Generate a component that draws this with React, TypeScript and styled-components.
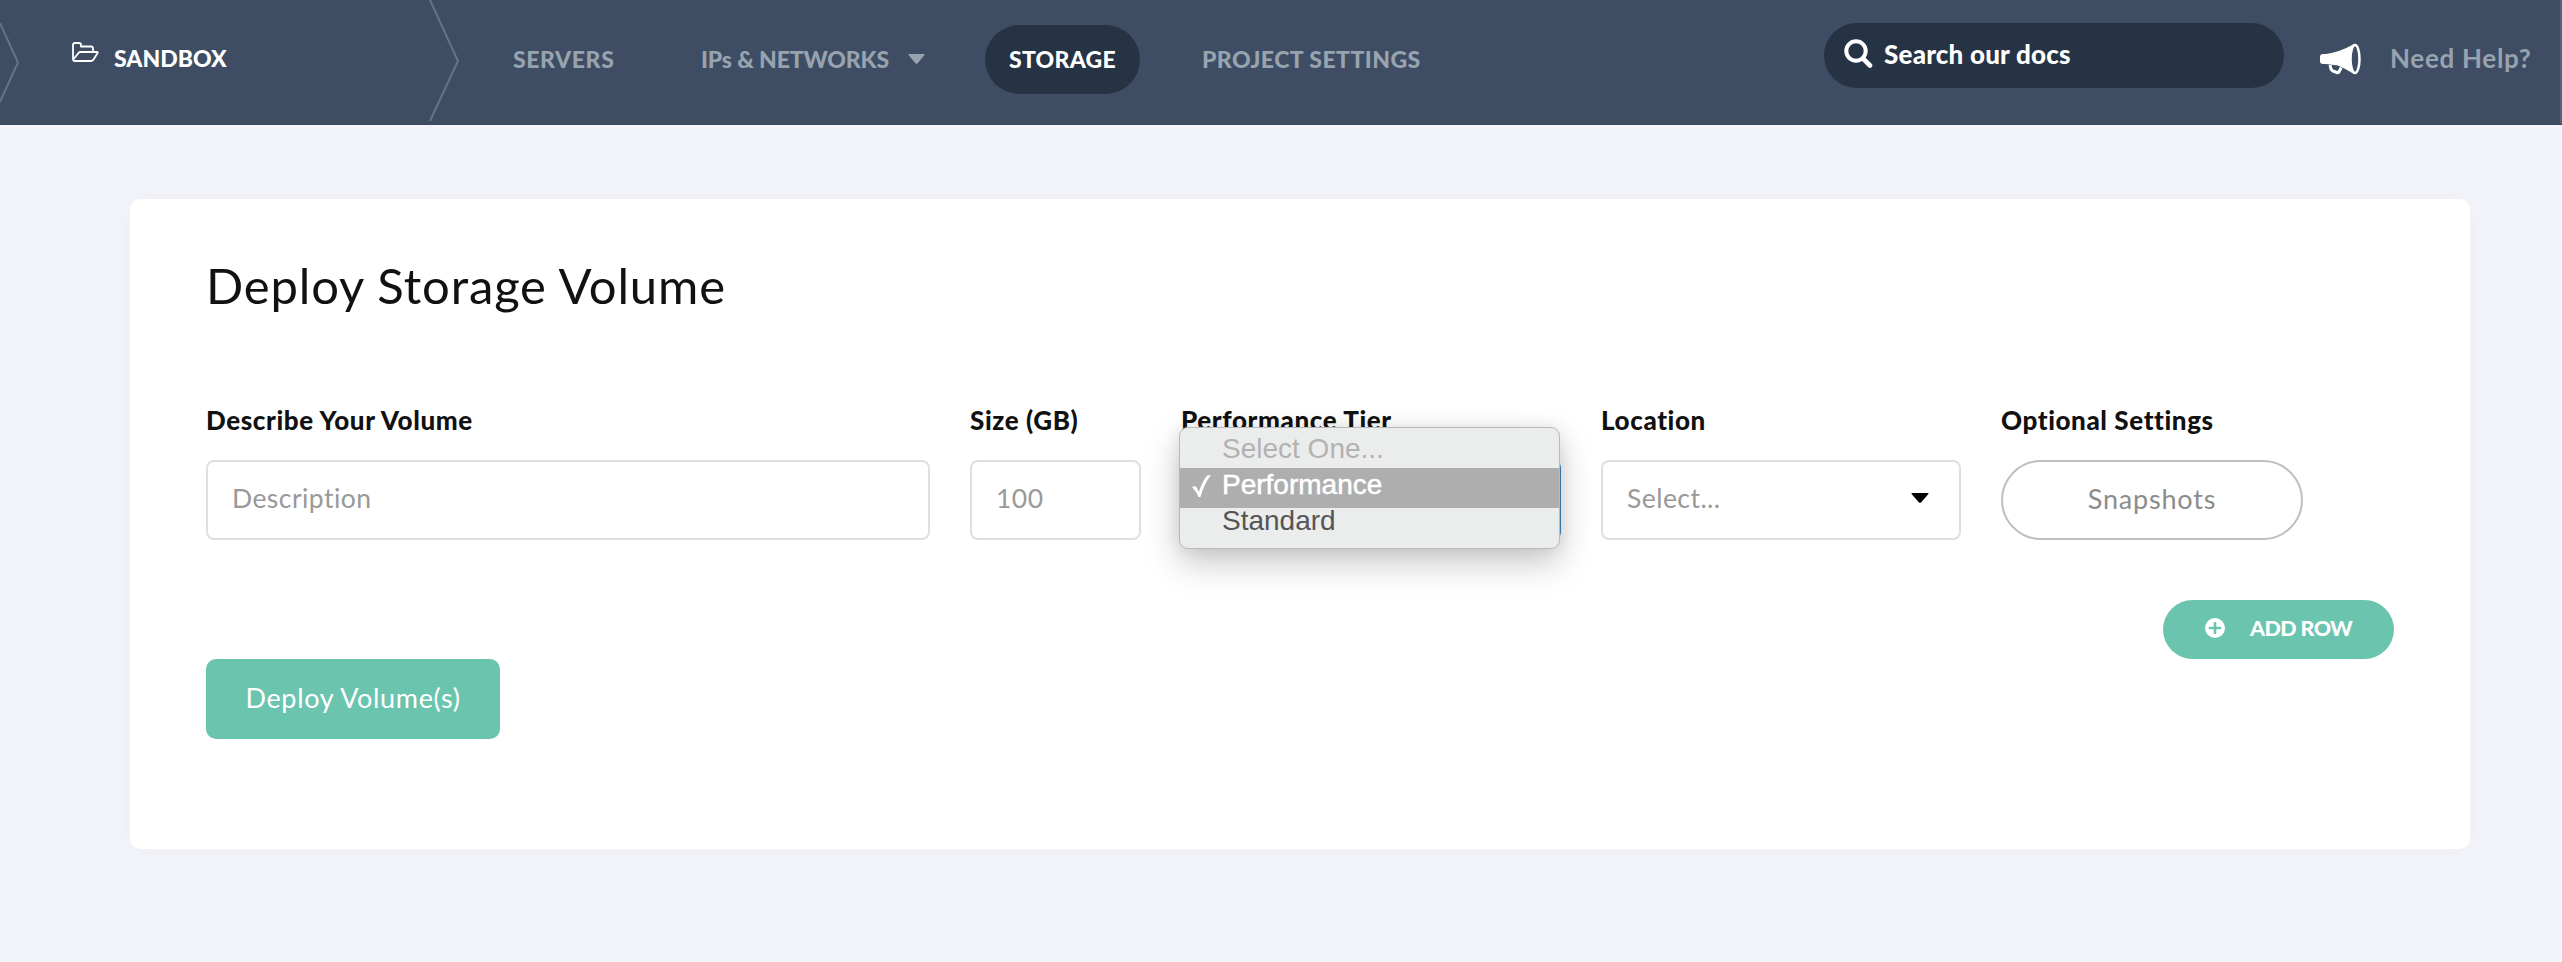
import React from 'react';
import styled, { createGlobalStyle } from 'styled-components';

const GlobalStyle = createGlobalStyle`
  * { box-sizing: border-box; }
  body {
    margin: 0;
    background: #f3f4f9;
    color: #111;
    font-family: Lato, "Liberation Sans", sans-serif;
  }
`;

const Page = styled.div`
  min-height: 962px;
  overflow: hidden;
`;

const Header = styled.header`
  display: flex;
  align-items: flex-start;
  height: 125px;
  background: #3e4d63;
  border-bottom: 1px solid #39485f;
`;

const Separator = styled.svg<{ $top: number }>`
  flex: none;
  margin-top: ${(p) => p.$top}px;
  fill: none;
  stroke: #64748a;
  stroke-width: 2;
`;

const Project = styled.div`
  display: flex;
  width: 409px;
  height: 118px;
  padding: 0 0 2px 51px;
  align-items: center;
  color: #fff;
`;

const FolderIcon = styled.svg`
  flex: none;
  width: 28px;
  height: 22px;
  margin: 0 15px 12px 0;
  fill: none;
  stroke: #fff;
  stroke-width: 1.8;
  stroke-linejoin: round;
`;

const ProjectName = styled.span`
  font-size: 23px;
  font-weight: 900;
  letter-spacing: 0;
`;

const Nav = styled.nav`
  display: flex;
  flex: 1;
  height: 69px;
  margin: 25px 0 0 29px;
`;

const NavItem = styled.a<{ $active?: boolean; $width: number; $track?: number }>`
  display: flex;
  align-items: center;
  width: ${(p) => p.$width}px;
  height: 69px;
  padding: 0 0 2px 24px;
  border-radius: 35px;
  background: ${(p) => (p.$active ? '#263345' : 'transparent')};
  color: ${(p) => (p.$active ? '#fff' : '#98a3b0')};
  font-size: 23px;
  font-weight: 900;
  letter-spacing: ${(p) => p.$track ?? 0.5}px;
  white-space: nowrap;
`;

const Spacer = styled.span<{ $width: number }>`
  flex: none;
  width: ${(p) => p.$width}px;
`;

const Caret = styled.svg<{ $width: number }>`
  width: ${(p) => p.$width}px;
  height: 10px;
  margin-left: auto;
  fill: currentColor;
`;

const Search = styled.div`
  display: flex;
  align-items: center;
  width: 460px;
  height: 65px;
  margin-top: 23px;
  padding: 0 0 4px 19px;
  border-radius: 33px;
  background: #263345;
  color: #fff;
  font-size: 26px;
  font-weight: 900;
  letter-spacing: 0.2px;
`;

const SearchIcon = styled.svg`
  width: 30px;
  height: 30px;
  margin: 0 11px 2px 0;
  fill: none;
  stroke: #fff;
  stroke-linecap: round;
`;

const Help = styled.div`
  display: flex;
  align-items: center;
  width: 278px;
  height: 123px;
  padding: 0 0 7px 35px;
  border-right: 2px solid #53637a;
  color: #98a3b0;
  font-size: 26px;
  font-weight: 700;
  letter-spacing: 0.7px;
  white-space: nowrap;
`;

const Megaphone = styled.svg`
  flex: none;
  width: 42px;
  height: 32px;
  margin: 2px 29px 0 0;
`;

const Card = styled.main`
  width: 2340px;
  height: 650px;
  margin: 74px 0 0 130px;
  padding: 56px 76px 0;
  border-radius: 10px;
  background: #fff;
  box-shadow: 0 2px 24px rgba(60, 70, 90, 0.03);
`;

const Title = styled.h1`
  margin: 0 0 90px;
  font-size: 49px;
  font-weight: 400;
  line-height: 60px;
  letter-spacing: 0.85px;
`;

const Fields = styled.div`
  display: grid;
  grid-template-columns: 724px 171px 380px 360px 302px;
  column-gap: 40px;
`;

const Field = styled.div`
  position: relative;
`;

const Label = styled.div`
  margin-bottom: 25px;
  font-size: 26px;
  font-weight: 900;
  line-height: 30px;
  letter-spacing: 0.6px;
  white-space: nowrap;
`;

const Control = styled.div<{ $focused?: boolean }>`
  display: flex;
  align-items: center;
  height: 80px;
  padding: 0 30px 4px 24px;
  border: 2px solid ${(p) => (p.$focused ? '#3f86bd' : '#dfdfdf')};
  border-radius: 8px;
  color: #999;
  font-size: 26.5px;
  letter-spacing: 0.45px;
`;

const Dark = styled.span`
  display: flex;
  margin-left: auto;
  color: #000;
`;

const PillButton = styled.div`
  display: flex;
  align-items: center;
  justify-content: center;
  height: 80px;
  padding-bottom: 4px;
  border: 2px solid #bfbfbf;
  border-radius: 40px;
  color: #8c8c8c;
  font-size: 27px;
  letter-spacing: 0.8px;
`;

const Menu = styled.div`
  position: absolute;
  top: 22px;
  left: -2px;
  width: 381px;
  height: 122px;
  padding: 3px 0;
  border: 1px solid #b9b9b9;
  border-radius: 9px;
  background: #ebecec;
  box-shadow: 0 14px 34px rgba(0, 0, 0, 0.22), 0 0 16px rgba(0, 0, 0, 0.08);
  font-family: "Liberation Sans", sans-serif;
  font-size: 28px;
`;

const Option = styled.div<{ $state?: 'disabled' | 'selected' }>`
  display: flex;
  height: ${(p) => (p.$state === 'selected' ? 40 : 37)}px;
  padding-left: 12px;
  background: ${(p) => (p.$state === 'selected' ? '#aeaeae' : 'transparent')};
  color: ${(p) => (p.$state === 'selected' ? '#fff' : p.$state === 'disabled' ? '#b2b2b2' : '#555')};
  line-height: ${(p) => (p.$state === 'disabled' ? 35 : p.$state === 'selected' ? 33 : 25)}px;
  -webkit-text-stroke: ${(p) => (p.$state === 'selected' ? '0.5px #fff' : '0')};
`;

const Mark = styled.span`
  flex: none;
  width: 30px;
  padding-top: 7px;
  line-height: 0;
`;

const AddLine = styled.div`
  display: flex;
  justify-content: flex-end;
  margin-top: 60px;
`;

const AddButton = styled.div`
  display: flex;
  align-items: center;
  width: 231px;
  height: 59px;
  padding: 0 0 3px 42px;
  border-radius: 30px;
  background: #6bc4ae;
  color: #fff;
  font-size: 21.5px;
  font-weight: 900;
  letter-spacing: -0.6px;
`;

const PlusIcon = styled.svg`
  width: 20px;
  height: 20px;
  margin-right: 25px;
`;

const DeployButton = styled.div`
  display: flex;
  align-items: center;
  justify-content: center;
  width: 294px;
  height: 80px;
  padding-bottom: 4px;
  border-radius: 10px;
  background: #6bc4ae;
  color: #fff;
  font-size: 27px;
  letter-spacing: 0.65px;
`;

const DownArrow = ({ width }: { width: number }) => (
  <Caret $width={width} viewBox="0 0 18 10" preserveAspectRatio="none">
    <path d="M1 0h16q1 0 .4 1L10 9.4q-1 .9-2 0L.6 1Q0 0 1 0z" />
  </Caret>
);

export default function App() {
  return (
    <Page>
      <GlobalStyle />
      <Header>
        <Separator $top={23} width="20" height="79" viewBox="0 0 20 79">
          <path d="M-1 -2L18 39.5L-1 81" />
        </Separator>
        <Project>
          <FolderIcon viewBox="0 0 28 22">
            <path d="M2 18V4q0-2 2-2h4q2 0 2 2v1.500h10q2 0 2 2V11M2.300 18.500L7.500 12Q8.200 11 9.500 11H26q1.200 0 .5 1.300l-4 6.200Q21.500 20 20 20H4q-2 0-2-2" />
          </FolderIcon>
          <ProjectName>SANDBOX</ProjectName>
        </Project>
        <Separator $top={0} width="31" height="121" viewBox="0 0 31 121">
          <path d="M0.500 -1L29 61L0.500 122" />
        </Separator>
        <Nav>
          <NavItem $width={150} $track={0.6}>SERVERS</NavItem>
          <Spacer $width={38} />
          <NavItem $width={248} $track={-0.15}>
            IPs &amp; NETWORKS
            <DownArrow width={17} />
          </NavItem>
          <Spacer $width={60} />
          <NavItem $active $width={155} $track={0.25}>STORAGE</NavItem>
          <Spacer $width={38} />
          <NavItem $width={270} $track={0.45}>PROJECT SETTINGS</NavItem>
        </Nav>
        <Search>
          <SearchIcon viewBox="0 0 30 30">
            <circle cx="13" cy="13" r="9.700" strokeWidth="4" />
            <path d="M20.500 21L27 27.500" strokeWidth="4.600" />
          </SearchIcon>
          Search our docs
        </Search>
        <Help>
          <Megaphone viewBox="0 0 42 32">
            <path d="M1 14q0-3 3-3h3Q21 9 35 1v30Q27 26 19 22.500L7 21H4q-3 0-3-3z" fill="#fff" />
            <path d="M11 22l1 4q.5 1.500 2 2l4 1.500q1.500.5 2.200-1l2-4" fill="none" stroke="#fff" strokeWidth="3" />
            <ellipse cx="36" cy="16" rx="4.500" ry="14" fill="#3e4d63" stroke="#fff" strokeWidth="2.500" />
          </Megaphone>
          Need Help?
        </Help>
      </Header>
      <Card>
        <Title>Deploy Storage Volume</Title>
        <Fields>
          <Field>
            <Label>Describe Your Volume</Label>
            <Control>Description</Control>
          </Field>
          <Field>
            <Label>Size (GB)</Label>
            <Control>100</Control>
          </Field>
          <Field>
            <Label>Performance Tier</Label>
            <Control $focused />
            <Menu>
              <Option $state="disabled">
                <Mark />
                Select One...
              </Option>
              <Option $state="selected">
                <Mark>
                  <svg width="20" height="23" viewBox="0 0 20 23">
                    <path d="M0 12L3.500 11Q5.500 13.500 6.800 17Q10 7 15 .5L19 0Q12 9 8.500 22H6.500Q4 16 0 12z" fill="#fff" />
                  </svg>
                </Mark>
                Performance
              </Option>
              <Option>
                <Mark />
                Standard
              </Option>
            </Menu>
          </Field>
          <Field>
            <Label>Location</Label>
            <Control>
              Select...
              <Dark>
                <DownArrow width={18} />
              </Dark>
            </Control>
          </Field>
          <Field>
            <Label>Optional Settings</Label>
            <PillButton>Snapshots</PillButton>
          </Field>
        </Fields>
        <AddLine>
          <AddButton>
            <PlusIcon viewBox="0 0 20 20">
              <circle cx="10" cy="10" r="10" fill="#fff" />
              <path d="M10 5v10M5 10h10" stroke="#6bc4ae" strokeWidth="2.600" strokeLinecap="round" />
            </PlusIcon>
            ADD ROW
          </AddButton>
        </AddLine>
        <DeployButton>Deploy Volume(s)</DeployButton>
      </Card>
    </Page>
  );
}
